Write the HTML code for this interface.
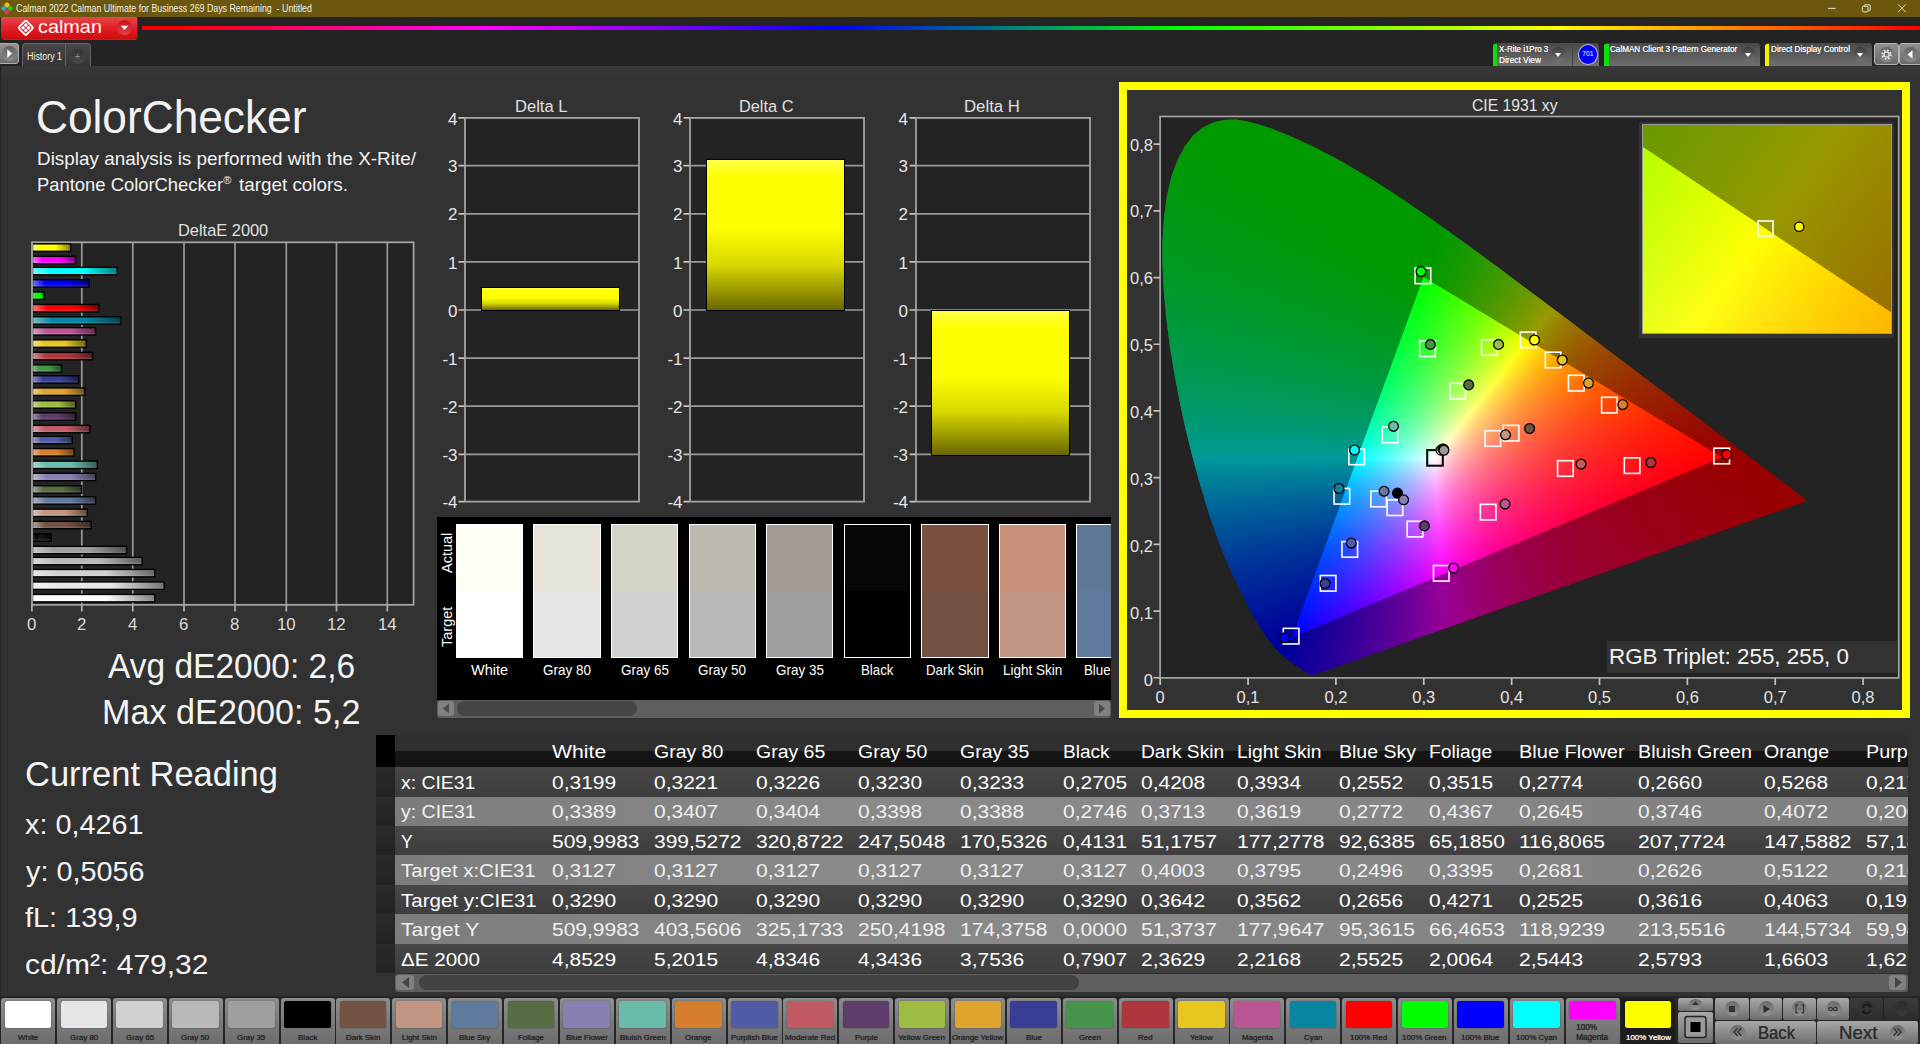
<!DOCTYPE html>
<html lang="en"><head><meta charset="utf-8"><title>Calman 2022 - ColorChecker</title>
<style>*{margin:0;padding:0;box-sizing:content-box}
html,body{width:1920px;height:1044px;overflow:hidden;background:#323232}
body{position:relative;font-family:"Liberation Sans",sans-serif;}
.t{position:absolute;white-space:pre;line-height:1;transform-origin:0 0;display:block}
.dd{position:absolute;top:43px;height:23px;border-radius:3px 3px 0 0;background:linear-gradient(#484848,#6f6f6f);overflow:hidden}
.dd i{position:absolute;left:0;top:1px;width:4.5px;height:22px;border-radius:2px 0 0 0}
.ddc{position:absolute;top:47px;width:15px;height:15px;border-radius:50%;background:linear-gradient(#3e3e3e,#727272)}
.ddc:after{content:"";position:absolute;left:4px;top:6px;border:3.5px solid transparent;border-top:4px solid #fff;border-bottom:0}
.gb{position:absolute;top:43px;height:22px;box-sizing:border-box;border:1px solid #b4b4b4;border-radius:3px;background:linear-gradient(#909090,#6a6a6a)}
.pb{position:absolute;top:997.500px;width:54px;height:46px;border-radius:3px 3px 0 0;background:linear-gradient(#8e8e8e,#848484 30%,#6c6c6c)}
.pb.sel{background:#1d1d1d}
.pb i{position:absolute;left:3.8px;top:3.5px;width:46.500px;height:27px;border-radius:2.500px;box-shadow:0 0 1.500px rgba(0,0,0,.45)}
.cb{position:absolute;border-radius:2px;background:linear-gradient(#a8a8a8,#8e8e8e 45%,#6e6e6e)}
.cb.dk{background:linear-gradient(#3c3c3c,#2c2c2c)}</style></head>
<body>
<div style="position:absolute;left:0;top:66px;width:1920px;height:14px;background:linear-gradient(#393939,#323232)"></div><div style="position:absolute;left:0;top:66px;width:1px;height:929px;background:#262626"></div>
<div style="position:absolute;left:0;top:0;width:1920px;height:17px;background:#6b570d"></div>
<svg style="position:absolute;left:0;top:2px" width="14" height="13" viewBox="0 0 14 13"><g transform="translate(7 6.4) rotate(45)"><rect x="-4.6" y="-4.6" width="4.4" height="4.4" rx="1" fill="#f2c200"/><rect x=".2" y="-4.6" width="4.4" height="4.4" rx="1" fill="#22c032"/><rect x="-4.6" y=".2" width="4.4" height="4.4" rx="1" fill="#27a8e0"/><rect x=".2" y=".2" width="4.4" height="4.4" rx="1" fill="#e8305a"/></g></svg>
<span class="t" style="left:16px;top:3.7px;font-size:10px;color:#f6f2e4;transform:scaleX(0.883);">Calman 2022 Calman Ultimate for Business 269 Days Remaining  - Untitled</span>
<svg style="position:absolute;left:1820px;top:0" width="100" height="17" viewBox="0 0 100 17"><g stroke="#ece6c8" stroke-width="1" fill="none"><path d="M8 8.400h7.600"/><rect x="42.400" y="6.300" width="5.600" height="5.600" rx="1.200"/><path d="M44.200 6.300v-.6q0-.9 .9-.9h4.200q.9 0 .9.900v4.200q0 .9-.9.900h-1.200"/><path d="M78 4.300l7.800 7.800M85.800 4.300l-7.800 7.800" stroke-width=".9"/></g></svg>
<div style="position:absolute;left:0;top:17px;width:1920px;height:49px;background:#232323"></div>
<div style="position:absolute;left:142px;top:26px;width:1778px;height:4px;background:linear-gradient(90deg,#f00 0%,#f00 1.5%,#f0f 19.5%,#00f 39%,#0f0 58.5%,#ff0 79.5%,#f00 100%)"></div>
<div style="position:absolute;left:1px;top:17px;width:135.800px;height:21.800px;border-radius:0 0 3px 3px;background:linear-gradient(#e8474c,#e22228 45%,#d81216 80%,#cf0e10);box-shadow:.5px 1px 0 #4a5656"></div>
<svg style="position:absolute;left:16px;top:18px" width="20" height="20" viewBox="-10 -10 20 20"><g transform="translate(-.2 -.2) rotate(45)"><rect x="-5.300" y="-5.300" width="10.600" height="10.600" rx="1.500" fill="none" stroke="#fff" stroke-width="1.900"/><g fill="#fff"><rect x="-3.450" y="-3.450" width="3.100" height="3.100" rx=".9"/><rect x=".35" y="-3.450" width="3.100" height="3.100" rx=".9"/><rect x="-3.450" y=".35" width="3.100" height="3.100" rx=".9"/><rect x=".35" y=".35" width="3.100" height="3.100" rx=".9"/></g></g></svg>
<span class="t" style="left:37.5px;top:17.7px;font-size:18.8px;color:#fff;transform:scaleX(1.056);">calman</span>
<div style="position:absolute;left:117px;top:20px;width:15px;height:15px;border-radius:50%;background:linear-gradient(#c8141c,#e04046)"></div>
<svg style="position:absolute;left:117px;top:20px" width="15" height="15"><path d="M3.700 5.700h7.600l-3.800 4.300z" fill="#fff"/></svg>
<div style="position:absolute;left:-2px;top:43px;width:21px;height:21px;border-radius:3px;border:1px solid #b0b0b0;box-sizing:border-box;background:linear-gradient(#959595,#6c6c6c)"></div>
<div style="position:absolute;left:2px;top:46px;width:15px;height:15px;border-radius:50%;background:linear-gradient(#5e5e5e,#8a8a8a)"></div>
<svg style="position:absolute;left:2px;top:46px" width="15" height="15"><path d="M5.3 3.3l4.6 4.2-4.6 4.2z" fill="#fff"/></svg>
<div style="position:absolute;left:22px;top:43px;width:69px;height:23px;border-radius:4px 4px 0 0;border:1px solid #636363;border-bottom:0;box-sizing:border-box;background:linear-gradient(#474747,#353535)"></div>
<div style="position:absolute;left:65px;top:44px;width:1px;height:22px;background:#636363"></div>
<span class="t" style="left:26.5px;top:51.5px;font-size:10px;color:#f0f0f0;transform:scaleX(0.887);">History 1</span>
<div style="position:absolute;left:70px;top:49px;width:15px;height:15px;border-radius:50%;background:linear-gradient(#333,#484848)"></div>
<span class="t" style="left:74.48px;top:51.5px;font-size:10px;color:#8a8a8a;">+</span>
<div class="dd" style="left:1492.5px;width:106.5px"><i style="background:#0be00b"></i></div><span class="t" style="left:1498.8px;top:44.1px;font-size:9.6px;color:#f0f0f0;transform:scaleX(0.825);text-shadow:0 0 .3px #fff;">X-Rite i1Pro 3</span><span class="t" style="left:1498.8px;top:55.3px;font-size:9.6px;color:#f0f0f0;transform:scaleX(0.868);text-shadow:0 0 .3px #fff;">Direct View</span><div class="ddc" style="left:1550.5px"></div>
<div style="position:absolute;left:1572px;top:45px;width:1px;height:21px;background:#444"></div>
<div style="position:absolute;left:1578.500px;top:45.200px;width:18.600px;height:18.600px;border-radius:50%;background:#0000fa;box-shadow:0 0 0 1px #b8b8e0"></div>
<span class="t" style="left:1582.23px;top:51.1px;font-size:6.8px;color:#fff;">701</span>
<div class="dd" style="left:1604px;width:156px"><i style="background:#0be00b"></i></div><span class="t" style="left:1610.3px;top:44.1px;font-size:9.6px;color:#f0f0f0;transform:scaleX(0.846);text-shadow:0 0 .3px #fff;">CalMAN Client 3 Pattern Generator</span><div class="ddc" style="left:1740.5px"></div>
<div class="dd" style="left:1764.5px;width:107.5px"><i style="background:#f0f000"></i></div><span class="t" style="left:1770.8px;top:44.1px;font-size:9.6px;color:#f0f0f0;transform:scaleX(0.851);text-shadow:0 0 .3px #fff;">Direct Display Control</span><div class="ddc" style="left:1852.5px"></div>
<div class="gb" style="left:1874px;width:25px"></div><div class="gb" style="left:1899px;width:25px"></div>
<div style="position:absolute;left:1879px;top:46.5px;width:15px;height:15px;border-radius:50%;background:linear-gradient(#666,#8a8a8a)"></div><div style="position:absolute;left:1903px;top:46.5px;width:15px;height:15px;border-radius:50%;background:linear-gradient(#666,#8a8a8a)"></div>
<svg style="position:absolute;left:1879px;top:46.5px" width="40" height="15"><g transform="translate(7.5 7.5)" fill="none" stroke="#f0f0f0"><circle r="2.6" stroke-width="1.3"/><circle r="4.3" stroke-width="1.7" stroke-dasharray="1.7 1.68"/></g><path d="M28.5 7.5l5-4.3v8.6z" fill="#fff"/></svg>
<span class="t" style="left:36px;top:93px;font-size:47px;color:#f2f2f2;transform:scaleX(0.941);">ColorChecker</span>
<span class="t" style="left:37px;top:149.3px;font-size:19px;color:#f2f2f2;transform:scaleX(0.994);">Display analysis is performed with the X-Rite/</span>
<span class="t" style="left:37px;top:174.5px;font-size:19px;color:#f2f2f2;transform:scaleX(0.968);">Pantone ColorChecker</span>
<span class="t" style="left:223.3px;top:175px;font-size:11px;color:#f2f2f2;">®</span>
<span class="t" style="left:238.5px;top:174.5px;font-size:19px;color:#f2f2f2;transform:scaleX(0.992);">target colors.</span>
<span class="t" style="left:178.15px;top:222.6px;font-size:16.8px;color:#e0e0e0;transform:scaleX(0.977);">DeltaE 2000</span>
<svg style="position:absolute;left:20px;top:236px" width="400" height="380" viewBox="20 236 400 380"><rect x="32" y="242.3" width="381.600" height="362.500" fill="#232323" stroke="#a4a4a4" stroke-width="1.800"/><path d="M81.8 243V604M132.8 243V604M184 243V604M235 243V604M286.3 243V604M336.5 243V604M387.3 243V604" stroke="#989898" stroke-width="1.700" fill="none"/><path d="M31.9 604V611.500M81.8 604V611.500M132.8 604V611.500M184 604V611.500M235 604V611.500M286.3 604V611.500M336.5 604V611.500M387.3 604V611.500" stroke="#b0b0b0" stroke-width="1.700" fill="none"/></svg>
<span class="t" style="left:26.82px;top:615.85px;font-size:16.5px;color:#dcdcdc;transform:scaleX(1.02);">0</span>
<span class="t" style="left:76.72px;top:615.85px;font-size:16.5px;color:#dcdcdc;transform:scaleX(1.02);">2</span>
<span class="t" style="left:127.72px;top:615.85px;font-size:16.5px;color:#dcdcdc;transform:scaleX(1.02);">4</span>
<span class="t" style="left:178.92px;top:615.85px;font-size:16.5px;color:#dcdcdc;transform:scaleX(1.02);">6</span>
<span class="t" style="left:229.92px;top:615.85px;font-size:16.5px;color:#dcdcdc;transform:scaleX(1.02);">8</span>
<span class="t" style="left:276.54px;top:615.85px;font-size:16.5px;color:#dcdcdc;transform:scaleX(1.02);">10</span>
<span class="t" style="left:326.74px;top:615.85px;font-size:16.5px;color:#dcdcdc;transform:scaleX(1.02);">12</span>
<span class="t" style="left:377.54px;top:615.85px;font-size:16.5px;color:#dcdcdc;transform:scaleX(1.02);">14</span>
<svg style="position:absolute;left:33px;top:243px" width="380" height="362" viewBox="33 243 380 362"><defs><linearGradient id="gl" x1="0" y1="0" x2="0" y2="1"><stop offset="0" stop-color="#fff" stop-opacity="0"/><stop offset=".6" stop-color="#fff" stop-opacity="0"/><stop offset="1" stop-color="#fff" stop-opacity=".16"/></linearGradient><linearGradient id="b0"><stop offset="0" stop-color="#ffff73"/><stop offset="0.22" stop-color="#ffff00"/><stop offset="0.6" stop-color="#ffff00"/><stop offset="1" stop-color="#808000"/></linearGradient><linearGradient id="b1"><stop offset="0" stop-color="#ff73ff"/><stop offset="0.22" stop-color="#ff00ff"/><stop offset="0.6" stop-color="#ff00ff"/><stop offset="1" stop-color="#800080"/></linearGradient><linearGradient id="b2"><stop offset="0" stop-color="#73ffff"/><stop offset="0.22" stop-color="#00ffff"/><stop offset="0.6" stop-color="#00ffff"/><stop offset="1" stop-color="#008080"/></linearGradient><linearGradient id="b3"><stop offset="0" stop-color="#7373ff"/><stop offset="0.22" stop-color="#0000ff"/><stop offset="0.6" stop-color="#0000ff"/><stop offset="1" stop-color="#000080"/></linearGradient><linearGradient id="b4"><stop offset="0" stop-color="#73ff73"/><stop offset="0.22" stop-color="#00ff00"/><stop offset="0.6" stop-color="#00ff00"/><stop offset="1" stop-color="#008000"/></linearGradient><linearGradient id="b5"><stop offset="0" stop-color="#ff7373"/><stop offset="0.22" stop-color="#ff0000"/><stop offset="0.6" stop-color="#ff0000"/><stop offset="1" stop-color="#800000"/></linearGradient><linearGradient id="b6"><stop offset="0" stop-color="#77bccb"/><stop offset="0.22" stop-color="#0885a1"/><stop offset="0.6" stop-color="#0885a1"/><stop offset="1" stop-color="#044250"/></linearGradient><linearGradient id="b7"><stop offset="0" stop-color="#daa2c5"/><stop offset="0.22" stop-color="#bb5695"/><stop offset="0.6" stop-color="#bb5695"/><stop offset="1" stop-color="#5e2b4a"/></linearGradient><linearGradient id="b8"><stop offset="0" stop-color="#f2e084"/><stop offset="0.22" stop-color="#e7c71f"/><stop offset="0.6" stop-color="#e7c71f"/><stop offset="1" stop-color="#746410"/></linearGradient><linearGradient id="b9"><stop offset="0" stop-color="#d39094"/><stop offset="0.22" stop-color="#af363c"/><stop offset="0.6" stop-color="#af363c"/><stop offset="1" stop-color="#581b1e"/></linearGradient><linearGradient id="b10"><stop offset="0" stop-color="#99c49b"/><stop offset="0.22" stop-color="#469449"/><stop offset="0.6" stop-color="#469449"/><stop offset="1" stop-color="#234a24"/></linearGradient><linearGradient id="b11"><stop offset="0" stop-color="#9294c5"/><stop offset="0.22" stop-color="#383d96"/><stop offset="0.6" stop-color="#383d96"/><stop offset="1" stop-color="#1c1e4b"/></linearGradient><linearGradient id="b12"><stop offset="0" stop-color="#eecc8c"/><stop offset="0.22" stop-color="#e0a32e"/><stop offset="0.6" stop-color="#e0a32e"/><stop offset="1" stop-color="#705217"/></linearGradient><linearGradient id="b13"><stop offset="0" stop-color="#c9da96"/><stop offset="0.22" stop-color="#9dbc40"/><stop offset="0.6" stop-color="#9dbc40"/><stop offset="1" stop-color="#4e5e20"/></linearGradient><linearGradient id="b14"><stop offset="0" stop-color="#a694ae"/><stop offset="0.22" stop-color="#5e3c6c"/><stop offset="0.6" stop-color="#5e3c6c"/><stop offset="1" stop-color="#2f1e36"/></linearGradient><linearGradient id="b15"><stop offset="0" stop-color="#dda4a9"/><stop offset="0.22" stop-color="#c15a63"/><stop offset="0.6" stop-color="#c15a63"/><stop offset="1" stop-color="#602d32"/></linearGradient><linearGradient id="b16"><stop offset="0" stop-color="#9fa5ce"/><stop offset="0.22" stop-color="#505ba6"/><stop offset="0.6" stop-color="#505ba6"/><stop offset="1" stop-color="#282e53"/></linearGradient><linearGradient id="b17"><stop offset="0" stop-color="#e8b88b"/><stop offset="0.22" stop-color="#d67e2c"/><stop offset="0.6" stop-color="#d67e2c"/><stop offset="1" stop-color="#6b3f16"/></linearGradient><linearGradient id="b18"><stop offset="0" stop-color="#abdbd0"/><stop offset="0.22" stop-color="#67bdaa"/><stop offset="0.6" stop-color="#67bdaa"/><stop offset="1" stop-color="#345e55"/></linearGradient><linearGradient id="b19"><stop offset="0" stop-color="#bcb9d4"/><stop offset="0.22" stop-color="#8580b1"/><stop offset="0.6" stop-color="#8580b1"/><stop offset="1" stop-color="#424058"/></linearGradient><linearGradient id="b20"><stop offset="0" stop-color="#a3ae98"/><stop offset="0.22" stop-color="#576c43"/><stop offset="0.6" stop-color="#576c43"/><stop offset="1" stop-color="#2c3622"/></linearGradient><linearGradient id="b21"><stop offset="0" stop-color="#a9b6c9"/><stop offset="0.22" stop-color="#627a9d"/><stop offset="0.6" stop-color="#627a9d"/><stop offset="1" stop-color="#313d4e"/></linearGradient><linearGradient id="b22"><stop offset="0" stop-color="#ddc5ba"/><stop offset="0.22" stop-color="#c29682"/><stop offset="0.6" stop-color="#c29682"/><stop offset="1" stop-color="#614b41"/></linearGradient><linearGradient id="b23"><stop offset="0" stop-color="#b2a098"/><stop offset="0.22" stop-color="#735244"/><stop offset="0.6" stop-color="#735244"/><stop offset="1" stop-color="#3a2922"/></linearGradient><linearGradient id="b24"><stop offset="0" stop-color="#2a2a2a"/><stop offset="0.2" stop-color="#050505"/><stop offset="0.5" stop-color="#151515"/><stop offset="1" stop-color="#050505"/></linearGradient><linearGradient id="b25"><stop offset="0" stop-color="#cacaca"/><stop offset="0.22" stop-color="#9e9e9e"/><stop offset="0.6" stop-color="#9e9e9e"/><stop offset="1" stop-color="#4f4f4f"/></linearGradient><linearGradient id="b26"><stop offset="0" stop-color="#d8d8d8"/><stop offset="0.22" stop-color="#b8b8b8"/><stop offset="0.6" stop-color="#b8b8b8"/><stop offset="1" stop-color="#5c5c5c"/></linearGradient><linearGradient id="b27"><stop offset="0" stop-color="#e5e5e5"/><stop offset="0.22" stop-color="#d0d0d0"/><stop offset="0.6" stop-color="#d0d0d0"/><stop offset="1" stop-color="#686868"/></linearGradient><linearGradient id="b28"><stop offset="0" stop-color="#f1f1f1"/><stop offset="0.22" stop-color="#e6e6e6"/><stop offset="0.6" stop-color="#e6e6e6"/><stop offset="1" stop-color="#737373"/></linearGradient><linearGradient id="b29"><stop offset="0" stop-color="#ffffff"/><stop offset="0.22" stop-color="#ffffff"/><stop offset="0.6" stop-color="#ffffff"/><stop offset="1" stop-color="#808080"/></linearGradient></defs><rect x="32.5" y="243.85" width="38.1" height="7.4" fill="url(#b0)" stroke="#000" stroke-width="1.4"/><rect x="33.2" y="244.55" width="36.9" height="6" fill="url(#gl)"/><rect x="32.5" y="256.35" width="43.1" height="7.4" fill="url(#b1)" stroke="#000" stroke-width="1.4"/><rect x="33.2" y="257.05" width="41.9" height="6" fill="url(#gl)"/><rect x="32.5" y="267.35" width="84.8" height="7.4" fill="url(#b2)" stroke="#000" stroke-width="1.4"/><rect x="33.2" y="268.05" width="83.6" height="6" fill="url(#gl)"/><rect x="32.5" y="279.75" width="56.8" height="7.4" fill="url(#b3)" stroke="#000" stroke-width="1.4"/><rect x="33.2" y="280.45" width="55.6" height="6" fill="url(#gl)"/><rect x="32.5" y="291.95" width="11.8" height="7.4" fill="url(#b4)" stroke="#000" stroke-width="1.4"/><rect x="33.2" y="292.65" width="10.6" height="6" fill="url(#gl)"/><rect x="32.5" y="304.45" width="66.2" height="7.4" fill="url(#b5)" stroke="#000" stroke-width="1.4"/><rect x="33.2" y="305.15" width="65" height="6" fill="url(#gl)"/><rect x="32.5" y="316.75" width="88.1" height="7.4" fill="url(#b6)" stroke="#000" stroke-width="1.4"/><rect x="33.2" y="317.45" width="86.9" height="6" fill="url(#gl)"/><rect x="32.5" y="327.65" width="63.1" height="7.4" fill="url(#b7)" stroke="#000" stroke-width="1.4"/><rect x="33.2" y="328.35" width="61.9" height="6" fill="url(#gl)"/><rect x="32.5" y="339.85" width="53.8" height="7.4" fill="url(#b8)" stroke="#000" stroke-width="1.4"/><rect x="33.2" y="340.55" width="52.6" height="6" fill="url(#gl)"/><rect x="32.5" y="352.35" width="60.1" height="7.4" fill="url(#b9)" stroke="#000" stroke-width="1.4"/><rect x="33.2" y="353.05" width="58.9" height="6" fill="url(#gl)"/><rect x="32.5" y="364.85" width="29.1" height="7.4" fill="url(#b10)" stroke="#000" stroke-width="1.4"/><rect x="33.2" y="365.55" width="27.9" height="6" fill="url(#gl)"/><rect x="32.5" y="375.75" width="46.1" height="7.4" fill="url(#b11)" stroke="#000" stroke-width="1.4"/><rect x="33.2" y="376.45" width="44.9" height="6" fill="url(#gl)"/><rect x="32.5" y="387.95" width="52.2" height="7.4" fill="url(#b12)" stroke="#000" stroke-width="1.4"/><rect x="33.2" y="388.65" width="51" height="6" fill="url(#gl)"/><rect x="32.5" y="400.75" width="43.2" height="7.4" fill="url(#b13)" stroke="#000" stroke-width="1.4"/><rect x="33.2" y="401.45" width="42" height="6" fill="url(#gl)"/><rect x="32.5" y="412.85" width="43.2" height="7.4" fill="url(#b14)" stroke="#000" stroke-width="1.4"/><rect x="33.2" y="413.55" width="42" height="6" fill="url(#gl)"/><rect x="32.5" y="425.35" width="57.2" height="7.4" fill="url(#b15)" stroke="#000" stroke-width="1.4"/><rect x="33.2" y="426.05" width="56" height="6" fill="url(#gl)"/><rect x="32.5" y="436.35" width="39.7" height="7.4" fill="url(#b16)" stroke="#000" stroke-width="1.4"/><rect x="33.2" y="437.05" width="38.5" height="6" fill="url(#gl)"/><rect x="32.5" y="448.6" width="41.6" height="7.4" fill="url(#b17)" stroke="#000" stroke-width="1.4"/><rect x="33.2" y="449.3" width="40.4" height="6" fill="url(#gl)"/><rect x="32.5" y="461.1" width="64.7" height="7.4" fill="url(#b18)" stroke="#000" stroke-width="1.4"/><rect x="33.2" y="461.8" width="63.5" height="6" fill="url(#gl)"/><rect x="32.5" y="473.25" width="63.2" height="7.4" fill="url(#b19)" stroke="#000" stroke-width="1.4"/><rect x="33.2" y="473.95" width="62" height="6" fill="url(#gl)"/><rect x="32.5" y="485.75" width="49.1" height="7.4" fill="url(#b20)" stroke="#000" stroke-width="1.4"/><rect x="33.2" y="486.45" width="47.9" height="6" fill="url(#gl)"/><rect x="32.5" y="496.75" width="63.1" height="7.4" fill="url(#b21)" stroke="#000" stroke-width="1.4"/><rect x="33.2" y="497.45" width="61.9" height="6" fill="url(#gl)"/><rect x="32.5" y="509.1" width="54.9" height="7.4" fill="url(#b22)" stroke="#000" stroke-width="1.4"/><rect x="33.2" y="509.8" width="53.7" height="6" fill="url(#gl)"/><rect x="32.5" y="521.35" width="58.7" height="7.4" fill="url(#b23)" stroke="#000" stroke-width="1.4"/><rect x="33.2" y="522.05" width="57.5" height="6" fill="url(#gl)"/><rect x="32.5" y="533.85" width="18.8" height="7.4" fill="url(#b24)" stroke="#000" stroke-width="1.4"/><rect x="33.2" y="534.55" width="17.6" height="6" fill="url(#gl)"/><rect x="32.5" y="546.35" width="94.1" height="7.4" fill="url(#b25)" stroke="#000" stroke-width="1.4"/><rect x="33.2" y="547.05" width="92.9" height="6" fill="url(#gl)"/><rect x="32.5" y="557.35" width="109.7" height="7.4" fill="url(#b26)" stroke="#000" stroke-width="1.4"/><rect x="33.2" y="558.05" width="108.5" height="6" fill="url(#gl)"/><rect x="32.5" y="569.45" width="122.2" height="7.4" fill="url(#b27)" stroke="#000" stroke-width="1.4"/><rect x="33.2" y="570.15" width="121" height="6" fill="url(#gl)"/><rect x="32.5" y="581.95" width="131.6" height="7.4" fill="url(#b28)" stroke="#000" stroke-width="1.4"/><rect x="33.2" y="582.65" width="130.4" height="6" fill="url(#gl)"/><rect x="32.5" y="594.45" width="122.2" height="7.4" fill="url(#b29)" stroke="#000" stroke-width="1.4"/><rect x="33.2" y="595.15" width="121" height="6" fill="url(#gl)"/></svg>
<span class="t" style="left:107.5px;top:647.5px;font-size:35px;color:#f4f4f4;transform:scaleX(0.957);">Avg dE2000: 2,6</span>
<span class="t" style="left:101.75px;top:693.7px;font-size:35px;color:#f4f4f4;transform:scaleX(0.977);">Max dE2000: 5,2</span>
<span class="t" style="left:24.5px;top:756px;font-size:35px;color:#f4f4f4;transform:scaleX(0.985);">Current Reading</span>
<span class="t" style="left:25px;top:810.35px;font-size:28.5px;color:#f4f4f4;transform:scaleX(1.011);">x: 0,4261</span>
<span class="t" style="left:25.5px;top:856.95px;font-size:28.5px;color:#f4f4f4;transform:scaleX(1.011);">y: 0,5056</span>
<span class="t" style="left:25px;top:903.05px;font-size:28.5px;color:#f4f4f4;transform:scaleX(1.014);">fL: 139,9</span>
<span class="t" style="left:25px;top:949.75px;font-size:28.5px;color:#f4f4f4;transform:scaleX(1.053);">cd/m²: 479,32</span>
<span class="t" style="left:515.25px;top:99.4px;font-size:16.8px;color:#e0e0e0;transform:scaleX(0.986);">Delta L</span>
<svg style="position:absolute;left:454px;top:110px" width="190" height="400" viewBox="454 110 190 400"><rect x="465" y="117.900" width="174" height="383.700" fill="#232323" stroke="#a4a4a4" stroke-width="1.800"/><path d="M465 165.7H639M465 213.8H639M465 261.9H639M465 310H639M465 358.1H639M465 406.2H639M465 454.3H639" stroke="#9a9a9a" stroke-width="1.700" fill="none"/><path d="M458.5 117.9H464.5M458.5 165.7H464.5M458.5 213.8H464.5M458.5 261.9H464.5M458.5 310H464.5M458.5 358.1H464.5M458.5 406.2H464.5M458.5 454.3H464.5M458.5 501.6H464.5" stroke="#c4c4c4" stroke-width="1.700" fill="none"/></svg>
<span class="t" style="left:448.05px;top:110.5px;font-size:17px;color:#e6e6e6;">4</span>
<span class="t" style="left:448.05px;top:158.3px;font-size:17px;color:#e6e6e6;">3</span>
<span class="t" style="left:448.05px;top:206.4px;font-size:17px;color:#e6e6e6;">2</span>
<span class="t" style="left:448.05px;top:254.5px;font-size:17px;color:#e6e6e6;">1</span>
<span class="t" style="left:448.05px;top:302.6px;font-size:17px;color:#e6e6e6;">0</span>
<span class="t" style="left:442.38px;top:350.7px;font-size:17px;color:#e6e6e6;">-1</span>
<span class="t" style="left:442.38px;top:398.8px;font-size:17px;color:#e6e6e6;">-2</span>
<span class="t" style="left:442.38px;top:446.9px;font-size:17px;color:#e6e6e6;">-3</span>
<span class="t" style="left:442.38px;top:494.2px;font-size:17px;color:#e6e6e6;">-4</span>
<div style="position:absolute;left:481px;top:287px;width:139px;height:24px;border:1px solid #000;box-sizing:border-box;background:linear-gradient(#ffff48,#ff0 12%,#ff0 45%,#d8d800 70%,#6a6600)"></div>
<span class="t" style="left:739.25px;top:99.4px;font-size:16.8px;color:#e0e0e0;transform:scaleX(0.973);">Delta C</span>
<svg style="position:absolute;left:679px;top:110px" width="190" height="400" viewBox="679 110 190 400"><rect x="690" y="117.900" width="174" height="383.700" fill="#232323" stroke="#a4a4a4" stroke-width="1.800"/><path d="M690 165.7H864M690 213.8H864M690 261.9H864M690 310H864M690 358.1H864M690 406.2H864M690 454.3H864" stroke="#9a9a9a" stroke-width="1.700" fill="none"/><path d="M683.5 117.9H689.5M683.5 165.7H689.5M683.5 213.8H689.5M683.5 261.9H689.5M683.5 310H689.5M683.5 358.1H689.5M683.5 406.2H689.5M683.5 454.3H689.5M683.5 501.6H689.5" stroke="#c4c4c4" stroke-width="1.700" fill="none"/></svg>
<span class="t" style="left:673.05px;top:110.5px;font-size:17px;color:#e6e6e6;">4</span>
<span class="t" style="left:673.05px;top:158.3px;font-size:17px;color:#e6e6e6;">3</span>
<span class="t" style="left:673.05px;top:206.4px;font-size:17px;color:#e6e6e6;">2</span>
<span class="t" style="left:673.05px;top:254.5px;font-size:17px;color:#e6e6e6;">1</span>
<span class="t" style="left:673.05px;top:302.6px;font-size:17px;color:#e6e6e6;">0</span>
<span class="t" style="left:667.38px;top:350.7px;font-size:17px;color:#e6e6e6;">-1</span>
<span class="t" style="left:667.38px;top:398.8px;font-size:17px;color:#e6e6e6;">-2</span>
<span class="t" style="left:667.38px;top:446.9px;font-size:17px;color:#e6e6e6;">-3</span>
<span class="t" style="left:667.38px;top:494.2px;font-size:17px;color:#e6e6e6;">-4</span>
<div style="position:absolute;left:706px;top:159px;width:139px;height:152px;border:1px solid #000;box-sizing:border-box;background:linear-gradient(#ffff48,#ff0 12%,#ff0 45%,#d8d800 70%,#6a6600)"></div>
<span class="t" style="left:964px;top:99.4px;font-size:16.8px;color:#e0e0e0;">Delta H</span>
<svg style="position:absolute;left:904.5px;top:110px" width="190" height="400" viewBox="904.5 110 190 400"><rect x="915.5" y="117.900" width="174" height="383.700" fill="#232323" stroke="#a4a4a4" stroke-width="1.800"/><path d="M915.5 165.7H1089.5M915.5 213.8H1089.5M915.5 261.9H1089.5M915.5 310H1089.5M915.5 358.1H1089.5M915.5 406.2H1089.5M915.5 454.3H1089.5" stroke="#9a9a9a" stroke-width="1.700" fill="none"/><path d="M909 117.9H915M909 165.7H915M909 213.8H915M909 261.9H915M909 310H915M909 358.1H915M909 406.2H915M909 454.3H915M909 501.6H915" stroke="#c4c4c4" stroke-width="1.700" fill="none"/></svg>
<span class="t" style="left:898.55px;top:110.5px;font-size:17px;color:#e6e6e6;">4</span>
<span class="t" style="left:898.55px;top:158.3px;font-size:17px;color:#e6e6e6;">3</span>
<span class="t" style="left:898.55px;top:206.4px;font-size:17px;color:#e6e6e6;">2</span>
<span class="t" style="left:898.55px;top:254.5px;font-size:17px;color:#e6e6e6;">1</span>
<span class="t" style="left:898.55px;top:302.6px;font-size:17px;color:#e6e6e6;">0</span>
<span class="t" style="left:892.88px;top:350.7px;font-size:17px;color:#e6e6e6;">-1</span>
<span class="t" style="left:892.88px;top:398.8px;font-size:17px;color:#e6e6e6;">-2</span>
<span class="t" style="left:892.88px;top:446.9px;font-size:17px;color:#e6e6e6;">-3</span>
<span class="t" style="left:892.88px;top:494.2px;font-size:17px;color:#e6e6e6;">-4</span>
<div style="position:absolute;left:930.8px;top:310px;width:139px;height:146px;border:1px solid #000;box-sizing:border-box;background:linear-gradient(#ffff48,#ff0 12%,#ff0 45%,#d8d800 70%,#6a6600)"></div>
<div style="position:absolute;left:437px;top:517px;width:674px;height:183px;background:#000;overflow:hidden">
<div style="position:absolute;left:18.9px;top:6.5px;width:65.3px;height:132px;border:1px solid #fff;background:linear-gradient(#fffdf5 66.3px,#ffffff 66.3px)"></div>
<span class="t" style="left:33.95px;top:146.05px;font-size:14.3px;color:#fff;transform:scaleX(1.015);">White</span>
<div style="position:absolute;left:96.47px;top:6.5px;width:65.3px;height:132px;border:1px solid #fff;background:linear-gradient(#e7e5d9 66.3px,#e6e6e6 66.3px)"></div>
<span class="t" style="left:106.12px;top:146.05px;font-size:14.3px;color:#fff;transform:scaleX(0.942);">Gray 80</span>
<div style="position:absolute;left:174.04px;top:6.5px;width:65.3px;height:132px;border:1px solid #fff;background:linear-gradient(#d5d2c6 66.3px,#d1d1d1 66.3px)"></div>
<span class="t" style="left:183.69px;top:146.05px;font-size:14.3px;color:#fff;transform:scaleX(0.942);">Gray 65</span>
<div style="position:absolute;left:251.61px;top:6.5px;width:65.3px;height:132px;border:1px solid #fff;background:linear-gradient(#beb9b1 66.3px,#b9b9b9 66.3px)"></div>
<span class="t" style="left:261.26px;top:146.05px;font-size:14.3px;color:#fff;transform:scaleX(0.942);">Gray 50</span>
<div style="position:absolute;left:329.18px;top:6.5px;width:65.3px;height:132px;border:1px solid #fff;background:linear-gradient(#a19b94 66.3px,#9e9e9e 66.3px)"></div>
<span class="t" style="left:338.83px;top:146.05px;font-size:14.3px;color:#fff;transform:scaleX(0.942);">Gray 35</span>
<div style="position:absolute;left:406.75px;top:6.5px;width:65.3px;height:132px;border:1px solid #fff;background:linear-gradient(#050608 66.3px,#000000 66.3px)"></div>
<span class="t" style="left:424.1px;top:146.05px;font-size:14.3px;color:#fff;transform:scaleX(0.929);">Black</span>
<div style="position:absolute;left:484.32px;top:6.5px;width:65.3px;height:132px;border:1px solid #fff;background:linear-gradient(#7c503e 66.3px,#735244 66.3px)"></div>
<span class="t" style="left:489.12px;top:146.05px;font-size:14.3px;color:#fff;transform:scaleX(0.929);">Dark Skin</span>
<div style="position:absolute;left:561.89px;top:6.5px;width:65.3px;height:132px;border:1px solid #fff;background:linear-gradient(#c8927a 66.3px,#c29682 66.3px)"></div>
<span class="t" style="left:565.79px;top:146.05px;font-size:14.3px;color:#fff;transform:scaleX(0.946);">Light Skin</span>
<div style="position:absolute;left:639.46px;top:6.5px;width:65.3px;height:132px;border:1px solid #fff;background:linear-gradient(#5d7897 66.3px,#5e7a9d 66.3px)"></div>
<span class="t" style="left:646.81px;top:146.05px;font-size:14.3px;color:#fff;transform:scaleX(0.93);">Blue Sky</span>
<span class="t" style="left:-1px;top:29px;font-size:14.5px;color:#fff;transform:rotate(-90deg);transform-origin:0 0;width:0;height:0"><span style="position:absolute;left:-27px;top:4px">Actual</span><span style="position:absolute;left:-101px;top:4px">Target</span></span>
</div>
<div style="position:absolute;left:437px;top:700px;width:674px;height:18px;background:#5f5f5f;border-radius:3px"></div>
<div style="position:absolute;left:457px;top:701px;width:180px;height:15px;background:#454545;border-radius:8px"></div>
<div style="position:absolute;left:438px;top:701px;width:16px;height:15px;background:#808080;border-radius:3px"></div>
<div style="position:absolute;left:1094px;top:701px;width:16px;height:15px;background:#808080;border-radius:3px"></div>
<svg style="position:absolute;left:437px;top:700px" width="674" height="18"><path d="M6 8.5l6-5v10z" fill="#484848"/><path d="M668 8.5l-6-5v10z" fill="#484848"/></svg>
<div id="cie" style="position:absolute;left:1119px;top:82px;width:775px;height:620px;border:8px solid #ff0"></div>
<span class="t" style="left:1471.7px;top:96.5px;font-size:17px;color:#e4e4e4;transform:scaleX(0.924);">CIE 1931 xy</span>
<svg style="position:absolute;left:1150px;top:110px" width="756" height="580" viewBox="1150 110 756 580"><rect x="1160.1" y="116.5" width="738.6" height="561.4" fill="#232323" stroke="#a4a4a4" stroke-width="1.7"/><path d="M1153.5 677.75H1160M1160.2 678V685M1153.5 611.05H1160M1248.06 678V685M1153.5 544.35H1160M1335.92 678V685M1153.5 477.65H1160M1423.78 678V685M1153.5 410.95H1160M1511.64 678V685M1153.5 344.25H1160M1599.5 678V685M1153.5 277.55H1160M1687.36 678V685M1153.5 210.85H1160M1775.22 678V685M1153.5 144.15H1160M1863.08 678V685" stroke="#c0c0c0" stroke-width="1.7" fill="none"/></svg>
<div style="position:absolute;left:1161px;top:118px;width:737px;height:559px;background:conic-gradient(at 130.71px 519.46px,rgb(0,255,255) 0deg,rgb(0,255,255) 20deg,rgb(6,255,255) 20.75deg,rgb(41,255,255) 24.25deg,rgb(78,255,255) 27.5deg,rgb(113,255,255) 30.25deg,rgb(150,255,255) 32.75deg,rgb(187,255,255) 35deg,rgb(224,255,255) 37deg,rgb(254,255,255) 38.5deg,rgb(255,240,255) 39.25deg,rgb(255,212,255) 40.75deg,rgb(255,185,255) 42.5deg,rgb(255,157,255) 44.5deg,rgb(255,131,255) 46.75deg,rgb(255,107,255) 49.25deg,rgb(255,82,255) 52.25deg,rgb(255,58,255) 55.75deg,rgb(255,33,255) 60deg,rgb(255,10,255) 65deg,rgb(255,0,255) 67.25deg,rgb(255,0,255) 200deg,rgb(0,0,255) 200.25deg,rgb(0,0,255) 247.25deg,rgb(0,255,255) 247.5deg,rgb(0,255,255) 360deg),conic-gradient(at 262.53px 159.12px,rgb(0,255,0) 0deg,rgb(0,255,0) 20deg,rgb(255,255,0) 20.25deg,rgb(255,255,0) 121.25deg,rgb(255,255,32) 134.5deg,rgb(255,255,57) 143.75deg,rgb(255,255,82) 151deg,rgb(255,255,106) 156.75deg,rgb(255,255,129) 161.5deg,rgb(255,255,153) 165.5deg,rgb(255,255,177) 168.75deg,rgb(255,255,202) 171.75deg,rgb(255,255,228) 174.25deg,rgb(254,255,255) 176.5deg,rgb(204,255,255) 180.5deg,rgb(152,255,255) 185deg,rgb(96,255,255) 190.25deg,rgb(31,255,255) 196.75deg,rgb(1,255,255) 200deg,rgb(0,255,255) 200.75deg,rgb(0,255,255) 301deg,rgb(0,255,0) 301.25deg,rgb(0,255,0) 360deg),conic-gradient(at 561.3px 339.29px,rgb(255,255,0) 0deg,rgb(255,255,0) 67.25deg,rgb(255,0,0) 67.5deg,rgb(255,0,0) 121deg,rgb(255,0,255) 121.25deg,rgb(255,0,255) 247.25deg,rgb(255,29,255) 251deg,rgb(255,64,255) 255deg,rgb(255,99,255) 258.5deg,rgb(255,136,255) 261.75deg,rgb(255,171,255) 264.5deg,rgb(255,207,255) 267deg,rgb(255,244,255) 269.25deg,rgb(255,253,255) 269.75deg,rgb(255,255,253) 270deg,rgb(255,255,224) 271.75deg,rgb(255,255,195) 273.75deg,rgb(255,255,167) 276deg,rgb(255,255,140) 278.5deg,rgb(255,255,113) 281.5deg,rgb(255,255,86) 285deg,rgb(255,255,59) 289deg,rgb(255,255,33) 293.75deg,rgb(255,255,7) 299.5deg,rgb(255,255,0) 301.25deg,rgb(255,255,0) 360deg);background-blend-mode:darken,darken,normal;clip-path:polygon(152.16px 556.92px,151.79px 556.96px,151.87px 556.96px,152.01px 556.94px,152.06px 556.92px,151.97px 556.96px,151.78px 557.02px,151.55px 557.03px,151.5px 557.03px,151.57px 557.02px,151.58px 557.02px,151.48px 557.05px,151.3px 557.09px,151.11px 557.1px,151px 557.1px,150.91px 557.1px,150.82px 557.1px,150.7px 557.1px,150.6px 557.1px,150.48px 557.1px,150.28px 557.11px,150px 557.09px,149.74px 557.03px,149.48px 556.94px,149.21px 556.83px,148.9px 556.7px,148.55px 556.53px,148.17px 556.33px,147.78px 556.11px,147.36px 555.86px,146.9px 555.57px,146.36px 555.24px,145.76px 554.85px,145.11px 554.42px,144.43px 553.95px,143.71px 553.44px,142.91px 552.89px,142.05px 552.3px,141.09px 551.67px,140.03px 550.96px,138.82px 550.17px,137.5px 549.3px,136.07px 548.36px,134.55px 547.35px,132.91px 546.25px,131.13px 545px,129.21px 543.62px,127.14px 542.08px,124.93px 540.3px,122.62px 538.37px,120.15px 536.18px,117.39px 533.43px,114.32px 530.08px,110.97px 526.15px,107.31px 521.41px,103.37px 515.9px,99.13px 509.57px,94.52px 501.98px,89.54px 493.13px,84.18px 483.03px,78.41px 471.3px,72.09px 457.9px,65.34px 442.86px,58.52px 425.86px,51.69px 406.73px,44.79px 385.67px,38.03px 362.86px,31.3px 338.02px,24.71px 311.44px,18.77px 284.27px,13.49px 256.45px,8.86px 228.04px,5.31px 200.31px,2.87px 173.41px,1.5px 147.2px,1.53px 122.53px,3.04px 99.38px,5.96px 77.79px,10.35px 58.67px,16.39px 42.19px,23.92px 28.21px,32.51px 17.1px,42.2px 9.21px,52.93px 4.27px,64.1px 1.64px,75.64px 1.58px,87.56px 3.83px,99.48px 7.01px,111.43px 10.91px,123.42px 15.75px,135.17px 20.86px,146.57px 26.06px,157.75px 31.54px,168.78px 37.23px,179.66px 43.11px,190.39px 49.19px,201.07px 55.47px,211.73px 61.97px,222.34px 68.66px,232.91px 75.51px,243.43px 82.5px,253.92px 89.63px,264.39px 96.87px,274.85px 104.21px,285.31px 111.65px,295.77px 119.17px,306.26px 126.76px,316.76px 134.42px,327.24px 142.13px,337.69px 149.87px,348.12px 157.64px,358.52px 165.42px,368.93px 173.19px,379.32px 180.97px,389.63px 188.71px,399.88px 196.43px,410.05px 204.11px,420.13px 211.73px,430.11px 219.29px,439.99px 226.77px,449.74px 234.15px,459.36px 241.44px,468.83px 248.61px,478.13px 255.64px,487.24px 262.52px,496.17px 269.25px,504.84px 275.79px,513.25px 282.17px,521.39px 288.36px,529.18px 294.28px,536.57px 299.87px,543.61px 305.19px,550.36px 310.29px,556.87px 315.22px,563.11px 319.93px,568.99px 324.37px,574.48px 328.5px,579.63px 332.36px,584.45px 335.98px,588.95px 339.39px,593.13px 342.57px,597.02px 345.53px,600.62px 348.27px,603.94px 350.79px,607.04px 353.13px,609.91px 355.29px,612.56px 357.28px,615.03px 359.14px,617.33px 360.88px,619.45px 362.49px,621.45px 364.01px,623.35px 365.45px,625.14px 366.81px,626.81px 368.08px,628.38px 369.28px,629.84px 370.39px,631.2px 371.42px,632.47px 372.36px,633.64px 373.22px,634.72px 374.02px,635.69px 374.75px,636.56px 375.41px,637.36px 376.02px,638.1px 376.58px,638.77px 377.09px,639.38px 377.56px,639.93px 377.98px,640.43px 378.36px,640.87px 378.69px,641.24px 378.97px,641.55px 379.21px,641.84px 379.43px,642.12px 379.64px,642.38px 379.84px,642.63px 380.03px,642.85px 380.19px,643.05px 380.34px,643.24px 380.49px,643.45px 380.65px,643.66px 380.81px,643.86px 380.96px,644.05px 381.1px,644.23px 381.24px,644.39px 381.36px,644.52px 381.46px,644.64px 381.55px,644.74px 381.63px,644.81px 381.68px,644.87px 381.73px,644.91px 381.76px,644.95px 381.79px,644.98px 381.81px,644.78px 383.22px)"></div>
<svg style="position:absolute;left:1161px;top:118px" width="737" height="559" viewBox="1161 118 737 559"><path d="M1313.16 674.92 1312.79 674.96 1312.87 674.96 1313.01 674.94 1313.06 674.92 1312.97 674.96 1312.78 675.02 1312.55 675.03 1312.5 675.03 1312.57 675.02 1312.58 675.02 1312.48 675.05 1312.3 675.09 1312.11 675.1 1312 675.1 1311.91 675.1 1311.82 675.1 1311.7 675.1 1311.6 675.1 1311.48 675.1 1311.28 675.11 1311 675.09 1310.74 675.03 1310.48 674.94 1310.21 674.83 1309.9 674.7 1309.55 674.53 1309.17 674.33 1308.78 674.11 1308.36 673.86 1307.9 673.57 1307.36 673.24 1306.76 672.85 1306.11 672.42 1305.43 671.95 1304.71 671.44 1303.91 670.89 1303.05 670.3 1302.09 669.67 1301.03 668.96 1299.82 668.17 1298.5 667.3 1297.07 666.36 1295.55 665.35 1293.91 664.25 1292.13 663 1290.21 661.62 1288.14 660.08 1285.93 658.3 1283.62 656.37 1281.15 654.18 1278.39 651.43 1275.32 648.08 1271.97 644.15 1268.31 639.41 1264.37 633.9 1260.13 627.57 1255.52 619.98 1250.54 611.13 1245.18 601.03 1239.41 589.3 1233.09 575.9 1226.34 560.86 1219.52 543.86 1212.69 524.73 1205.79 503.67 1199.03 480.86 1192.3 456.02 1185.71 429.44 1179.77 402.27 1174.49 374.45 1169.86 346.04 1166.31 318.31 1163.87 291.41 1162.5 265.2 1162.53 240.53 1164.04 217.38 1166.96 195.79 1171.35 176.67 1177.39 160.19 1184.92 146.21 1193.51 135.1 1203.2 127.21 1213.93 122.27 1225.1 119.64 1236.64 119.58 1248.56 121.83 1260.48 125.01 1272.43 128.91 1284.42 133.75 1296.17 138.86 1307.57 144.06 1318.75 149.54 1329.78 155.23 1340.66 161.11 1351.39 167.19 1362.07 173.47 1372.73 179.97 1383.34 186.66 1393.91 193.51 1404.43 200.5 1414.92 207.63 1425.39 214.87 1435.85 222.21 1446.31 229.65 1456.77 237.17 1467.26 244.76 1477.76 252.42 1488.24 260.13 1498.69 267.87 1509.12 275.64 1519.52 283.42 1529.93 291.19 1540.32 298.97 1550.63 306.71 1560.88 314.43 1571.05 322.11 1581.13 329.73 1591.11 337.29 1600.99 344.77 1610.74 352.15 1620.36 359.44 1629.83 366.61 1639.13 373.64 1648.24 380.52 1657.17 387.25 1665.84 393.79 1674.25 400.17 1682.39 406.36 1690.18 412.28 1697.57 417.87 1704.61 423.19 1711.36 428.29 1717.87 433.22 1724.11 437.93 1729.99 442.37 1735.48 446.5 1740.63 450.36 1745.45 453.98 1749.95 457.39 1754.13 460.57 1758.02 463.53 1761.62 466.27 1764.94 468.79 1768.04 471.13 1770.91 473.29 1773.56 475.28 1776.03 477.14 1778.33 478.88 1780.45 480.49 1782.45 482.01 1784.35 483.45 1786.14 484.81 1787.81 486.08 1789.38 487.28 1790.84 488.39 1792.2 489.42 1793.47 490.36 1794.64 491.22 1795.72 492.02 1796.69 492.75 1797.56 493.41 1798.36 494.02 1799.1 494.58 1799.77 495.09 1800.38 495.56 1800.93 495.98 1801.43 496.36 1801.87 496.69 1802.24 496.97 1802.55 497.21 1802.84 497.43 1803.12 497.64 1803.38 497.84 1803.63 498.03 1803.85 498.19 1804.05 498.34 1804.24 498.49 1804.45 498.65 1804.66 498.81 1804.86 498.96 1805.05 499.1 1805.23 499.24 1805.39 499.36 1805.52 499.46 1805.64 499.55 1805.74 499.63 1805.81 499.68 1805.87 499.73 1805.91 499.76 1805.95 499.79 1805.98 499.81 1805.78 501.22Z M1722.3 457.29 L1423.53 277.12 L1291.71 637.46Z" fill="#000" fill-opacity=".4" fill-rule="evenodd"/><rect x="1427.2" y="450.1" width="15.6" height="15.6" fill="none" stroke="#000" stroke-width="2"/><rect x="1503.26" y="425.37" width="15.6" height="15.6" fill="none" stroke="#fff" stroke-width="1.6"/><rect x="1484.99" y="430.71" width="15.6" height="15.6" fill="none" stroke="#fff" stroke-width="1.6"/><rect x="1370.84" y="491.17" width="15.6" height="15.6" fill="none" stroke="#fff" stroke-width="1.6"/><rect x="1449.84" y="383.4" width="15.6" height="15.6" fill="none" stroke="#fff" stroke-width="1.6"/><rect x="1387.09" y="499.91" width="15.6" height="15.6" fill="none" stroke="#fff" stroke-width="1.6"/><rect x="1382.26" y="427.1" width="15.6" height="15.6" fill="none" stroke="#fff" stroke-width="1.6"/><rect x="1601.6" y="397.28" width="15.6" height="15.6" fill="none" stroke="#fff" stroke-width="1.6"/><rect x="1341.95" y="541.6" width="15.6" height="15.6" fill="none" stroke="#fff" stroke-width="1.6"/><rect x="1557.6" y="460.7" width="15.6" height="15.6" fill="none" stroke="#fff" stroke-width="1.6"/><rect x="1407.2" y="521.3" width="15.6" height="15.6" fill="none" stroke="#fff" stroke-width="1.6"/><rect x="1481.6" y="339.7" width="15.6" height="15.6" fill="none" stroke="#fff" stroke-width="1.6"/><rect x="1568.45" y="375.3" width="15.6" height="15.6" fill="none" stroke="#fff" stroke-width="1.6"/><rect x="1320.3" y="575.5" width="15.6" height="15.6" fill="none" stroke="#fff" stroke-width="1.6"/><rect x="1419.7" y="340.95" width="15.6" height="15.6" fill="none" stroke="#fff" stroke-width="1.6"/><rect x="1624.3" y="457.8" width="15.6" height="15.6" fill="none" stroke="#fff" stroke-width="1.6"/><rect x="1545.3" y="352.2" width="15.6" height="15.6" fill="none" stroke="#fff" stroke-width="1.6"/><rect x="1480.3" y="504.3" width="15.6" height="15.6" fill="none" stroke="#fff" stroke-width="1.6"/><rect x="1334.1" y="488.45" width="15.6" height="15.6" fill="none" stroke="#fff" stroke-width="1.6"/><rect x="1713.9" y="448.19" width="15.6" height="15.6" fill="none" stroke="#fff" stroke-width="1.6"/><rect x="1415.12" y="268.02" width="15.6" height="15.6" fill="none" stroke="#fff" stroke-width="1.6"/><rect x="1283.31" y="628.36" width="15.6" height="15.6" fill="none" stroke="#fff" stroke-width="1.6"/><rect x="1348.87" y="449.06" width="15.6" height="15.6" fill="none" stroke="#fff" stroke-width="1.6"/><rect x="1433.49" y="565.5" width="15.6" height="15.6" fill="none" stroke="#fff" stroke-width="1.6"/><rect x="1520.3" y="332.1" width="15.6" height="15.6" fill="none" stroke="#fff" stroke-width="1.6"/><circle cx="1440.91" cy="450.15" r="4.9" fill="#f3f3f2" stroke="#000" stroke-width="1.3"/><circle cx="1442.85" cy="448.95" r="4.9" fill="#c8c8c8" stroke="#000" stroke-width="1.3"/><circle cx="1443.28" cy="449.15" r="4.9" fill="#a0a0a0" stroke="#000" stroke-width="1.3"/><circle cx="1443.64" cy="449.55" r="4.9" fill="#7a7a79" stroke="#000" stroke-width="1.3"/><circle cx="1443.9" cy="450.22" r="4.9" fill="#9a9a9a" stroke="#000" stroke-width="1.3"/><circle cx="1397.5" cy="493.06" r="4.9" fill="#000000" stroke="#000" stroke-width="1.3"/><circle cx="1529.58" cy="428.53" r="4.9" fill="#735244" stroke="#000" stroke-width="1.3"/><circle cx="1505.5" cy="434.8" r="4.9" fill="#c29682" stroke="#000" stroke-width="1.3"/><circle cx="1384.06" cy="491.32" r="4.9" fill="#627a9d" stroke="#000" stroke-width="1.3"/><circle cx="1468.68" cy="384.89" r="4.9" fill="#576c43" stroke="#000" stroke-width="1.3"/><circle cx="1403.57" cy="499.8" r="4.9" fill="#8580b1" stroke="#000" stroke-width="1.3"/><circle cx="1393.55" cy="426.33" r="4.9" fill="#67bdaa" stroke="#000" stroke-width="1.3"/><circle cx="1622.73" cy="404.58" r="4.9" fill="#d67e2c" stroke="#000" stroke-width="1.3"/><circle cx="1351.25" cy="543.1" r="4.9" fill="#505ba6" stroke="#000" stroke-width="1.3"/><circle cx="1581" cy="464" r="4.9" fill="#c15a63" stroke="#000" stroke-width="1.3"/><circle cx="1424.4" cy="525.9" r="4.9" fill="#5e3c6c" stroke="#000" stroke-width="1.3"/><circle cx="1498.5" cy="344.4" r="4.9" fill="#9dbc40" stroke="#000" stroke-width="1.3"/><circle cx="1588.5" cy="383.1" r="4.9" fill="#e0a32e" stroke="#000" stroke-width="1.3"/><circle cx="1325" cy="583.5" r="4.9" fill="#383d96" stroke="#000" stroke-width="1.3"/><circle cx="1430.4" cy="344.4" r="4.9" fill="#469449" stroke="#000" stroke-width="1.3"/><circle cx="1650.9" cy="462.5" r="4.9" fill="#af363c" stroke="#000" stroke-width="1.3"/><circle cx="1562.25" cy="360" r="4.9" fill="#e7c71f" stroke="#000" stroke-width="1.3"/><circle cx="1505" cy="504.1" r="4.9" fill="#bb5695" stroke="#000" stroke-width="1.3"/><circle cx="1339" cy="488.5" r="4.9" fill="#0885a1" stroke="#000" stroke-width="1.3"/><circle cx="1726.6" cy="454.6" r="4.9" fill="#ff0000" stroke="#000" stroke-width="1.3"/><circle cx="1421" cy="271.5" r="4.9" fill="#00ff00" stroke="#000" stroke-width="1.3"/><circle cx="1284.6" cy="637.75" r="4.9" fill="#0000ff" stroke="#000" stroke-width="1.3"/><circle cx="1354.5" cy="450" r="4.9" fill="#00ffff" stroke="#000" stroke-width="1.3"/><circle cx="1453.5" cy="568" r="4.9" fill="#ff00ff" stroke="#000" stroke-width="1.3"/><circle cx="1534.5" cy="340" r="4.9" fill="#ffff00" stroke="#000" stroke-width="1.3"/></svg>
<span class="t" style="left:1143.82px;top:671.55px;font-size:16.5px;color:#e4e4e4;">0</span>
<span class="t" style="left:1155.61px;top:688.85px;font-size:16.5px;color:#e4e4e4;">0</span>
<span class="t" style="left:1130.06px;top:604.67px;font-size:16.5px;color:#e4e4e4;">0,1</span>
<span class="t" style="left:1236.59px;top:688.85px;font-size:16.5px;color:#e4e4e4;">0,1</span>
<span class="t" style="left:1130.06px;top:537.8px;font-size:16.5px;color:#e4e4e4;">0,2</span>
<span class="t" style="left:1324.45px;top:688.85px;font-size:16.5px;color:#e4e4e4;">0,2</span>
<span class="t" style="left:1130.06px;top:470.92px;font-size:16.5px;color:#e4e4e4;">0,3</span>
<span class="t" style="left:1412.31px;top:688.85px;font-size:16.5px;color:#e4e4e4;">0,3</span>
<span class="t" style="left:1130.06px;top:404.05px;font-size:16.5px;color:#e4e4e4;">0,4</span>
<span class="t" style="left:1500.17px;top:688.85px;font-size:16.5px;color:#e4e4e4;">0,4</span>
<span class="t" style="left:1130.06px;top:337.17px;font-size:16.5px;color:#e4e4e4;">0,5</span>
<span class="t" style="left:1588.03px;top:688.85px;font-size:16.5px;color:#e4e4e4;">0,5</span>
<span class="t" style="left:1130.06px;top:270.3px;font-size:16.5px;color:#e4e4e4;">0,6</span>
<span class="t" style="left:1675.89px;top:688.85px;font-size:16.5px;color:#e4e4e4;">0,6</span>
<span class="t" style="left:1130.06px;top:203.43px;font-size:16.5px;color:#e4e4e4;">0,7</span>
<span class="t" style="left:1763.75px;top:688.85px;font-size:16.5px;color:#e4e4e4;">0,7</span>
<span class="t" style="left:1130.06px;top:136.55px;font-size:16.5px;color:#e4e4e4;">0,8</span>
<span class="t" style="left:1851.61px;top:688.85px;font-size:16.5px;color:#e4e4e4;">0,8</span>
<div style="position:absolute;left:1607px;top:641px;width:290px;height:32px;background:#323232"></div>
<span class="t" style="left:1609px;top:646.25px;font-size:22.5px;color:#f4f4f4;transform:scaleX(0.994);">RGB Triplet: 255, 255, 0</span>
<div style="position:absolute;left:1639px;top:122px;width:255px;height:216px;background:#333"></div>
<div style="position:absolute;left:1643px;top:125px;width:248px;height:208px;box-shadow:0 0 0 1px #9a9a9a;background:conic-gradient(from 31.31deg at -1213.23px 1955.95px,rgb(168,255,255) 0deg,rgb(204,255,255) 2.021deg,rgb(241,255,255) 3.862deg,rgb(255,254,255) 4.512deg,rgb(255,227,255) 5.863deg,rgb(255,200,255) 7.373deg,rgb(255,174,255) 9.074deg,rgb(255,174,255) 9.084deg),conic-gradient(from 111.55deg at -469.23px -290.45px,rgb(255,255,0) 0deg,rgb(255,255,0) 12.352deg,rgb(255,255,26) 23.683deg,rgb(255,255,31) 25.684deg),conic-gradient(from 296.67deg at 1217.17px 832.75px,rgb(255,255,30) 0deg,rgb(255,255,3) 6.11deg,rgb(255,255,0) 7.14deg,rgb(255,255,0) 14.5deg);background-blend-mode:darken,darken,normal"></div>
<svg style="position:absolute;left:1643px;top:125px" width="248" height="208"><path d="M0 0H248 V187.25 L0 22.07Z" fill="#000" fill-opacity=".4"/><rect x="115" y="96" width="15" height="15" fill="none" stroke="#fff" stroke-width="1.6"/><circle cx="156.23" cy="101.75" r="4.6" fill="#ff0" stroke="#000" stroke-width="1.3"/></svg>
<div style="position:absolute;left:376px;top:735px;width:1532px;height:258px;overflow:hidden">
<div style="position:absolute;left:0;top:0;width:100%;height:32px;background:linear-gradient(#2f2f2f 50%,#151515 50%)"></div>
<div style="position:absolute;left:0;top:0;width:19px;height:32px;background:#000"></div>
<div style="position:absolute;left:19px;top:32px;width:100%;height:30px;background:linear-gradient(#474747,#3d3d3d)"></div>
<div style="position:absolute;left:0;top:32px;width:19px;height:30px;background:linear-gradient(#2a2a2a,#222)"></div>
<div style="position:absolute;left:19px;top:62px;width:100%;height:29px;background:linear-gradient(90deg,#7c7c7c,#8a8a8a 30%,#858585 70%,#7e7e7e)"></div>
<div style="position:absolute;left:0;top:62px;width:19px;height:29px;background:linear-gradient(#2a2a2a,#222)"></div>
<div style="position:absolute;left:19px;top:91px;width:100%;height:29px;background:linear-gradient(#474747,#3d3d3d)"></div>
<div style="position:absolute;left:0;top:91px;width:19px;height:29px;background:linear-gradient(#2a2a2a,#222)"></div>
<div style="position:absolute;left:19px;top:120px;width:100%;height:30px;background:linear-gradient(90deg,#7c7c7c,#8a8a8a 30%,#858585 70%,#7e7e7e)"></div>
<div style="position:absolute;left:0;top:120px;width:19px;height:30px;background:linear-gradient(#2a2a2a,#222)"></div>
<div style="position:absolute;left:19px;top:150px;width:100%;height:29px;background:linear-gradient(#474747,#3d3d3d)"></div>
<div style="position:absolute;left:0;top:150px;width:19px;height:29px;background:linear-gradient(#2a2a2a,#222)"></div>
<div style="position:absolute;left:19px;top:179px;width:100%;height:30px;background:linear-gradient(90deg,#7c7c7c,#8a8a8a 30%,#858585 70%,#7e7e7e)"></div>
<div style="position:absolute;left:0;top:179px;width:19px;height:30px;background:linear-gradient(#2a2a2a,#222)"></div>
<div style="position:absolute;left:19px;top:209px;width:100%;height:29px;background:linear-gradient(#474747,#3d3d3d)"></div>
<div style="position:absolute;left:0;top:209px;width:19px;height:29px;background:linear-gradient(#2a2a2a,#222)"></div>
<span class="t" style="left:175.5px;top:7.8px;font-size:18px;color:#fff;transform:scaleX(1.178);">White</span>
<span class="t" style="left:277.6px;top:7.8px;font-size:18px;color:#fff;transform:scaleX(1.082);">Gray 80</span>
<span class="t" style="left:380px;top:7.8px;font-size:18px;color:#fff;transform:scaleX(1.082);">Gray 65</span>
<span class="t" style="left:482.4px;top:7.8px;font-size:18px;color:#fff;transform:scaleX(1.082);">Gray 50</span>
<span class="t" style="left:584.4px;top:7.8px;font-size:18px;color:#fff;transform:scaleX(1.082);">Gray 35</span>
<span class="t" style="left:686.8px;top:7.8px;font-size:18px;color:#fff;transform:scaleX(1.059);">Black</span>
<span class="t" style="left:764.8px;top:7.8px;font-size:18px;color:#fff;transform:scaleX(1.066);">Dark Skin</span>
<span class="t" style="left:861px;top:7.8px;font-size:18px;color:#fff;transform:scaleX(1.069);">Light Skin</span>
<span class="t" style="left:963.1px;top:7.8px;font-size:18px;color:#fff;transform:scaleX(1.084);">Blue Sky</span>
<span class="t" style="left:1053px;top:7.8px;font-size:18px;color:#fff;transform:scaleX(1.069);">Foliage</span>
<span class="t" style="left:1143.2px;top:7.8px;font-size:18px;color:#fff;transform:scaleX(1.111);">Blue Flower</span>
<span class="t" style="left:1261.5px;top:7.8px;font-size:18px;color:#fff;transform:scaleX(1.094);">Bluish Green</span>
<span class="t" style="left:1387.8px;top:7.8px;font-size:18px;color:#fff;transform:scaleX(1.083);">Orange</span>
<span class="t" style="left:1489.9px;top:7.8px;font-size:18px;color:#fff;transform:scaleX(1.1);">Purplish Blue</span>
<span class="t" style="left:24.7px;top:39px;font-size:18px;color:#fff;transform:scaleX(1.076);">x: CIE31</span>
<span class="t" style="left:175.5px;top:39px;font-size:18px;color:#fff;transform:scaleX(1.166);">0,3199</span>
<span class="t" style="left:277.6px;top:39px;font-size:18px;color:#fff;transform:scaleX(1.166);">0,3221</span>
<span class="t" style="left:380px;top:39px;font-size:18px;color:#fff;transform:scaleX(1.166);">0,3226</span>
<span class="t" style="left:482.4px;top:39px;font-size:18px;color:#fff;transform:scaleX(1.166);">0,3230</span>
<span class="t" style="left:584.4px;top:39px;font-size:18px;color:#fff;transform:scaleX(1.166);">0,3233</span>
<span class="t" style="left:686.8px;top:39px;font-size:18px;color:#fff;transform:scaleX(1.166);">0,2705</span>
<span class="t" style="left:764.8px;top:39px;font-size:18px;color:#fff;transform:scaleX(1.166);">0,4208</span>
<span class="t" style="left:861px;top:39px;font-size:18px;color:#fff;transform:scaleX(1.166);">0,3934</span>
<span class="t" style="left:963.1px;top:39px;font-size:18px;color:#fff;transform:scaleX(1.166);">0,2552</span>
<span class="t" style="left:1053px;top:39px;font-size:18px;color:#fff;transform:scaleX(1.166);">0,3515</span>
<span class="t" style="left:1143.2px;top:39px;font-size:18px;color:#fff;transform:scaleX(1.166);">0,2774</span>
<span class="t" style="left:1261.5px;top:39px;font-size:18px;color:#fff;transform:scaleX(1.166);">0,2660</span>
<span class="t" style="left:1387.8px;top:39px;font-size:18px;color:#fff;transform:scaleX(1.166);">0,5268</span>
<span class="t" style="left:1489.9px;top:39px;font-size:18px;color:#fff;transform:scaleX(1.166);">0,2176</span>
<span class="t" style="left:24.7px;top:68.43px;font-size:18px;color:#f0f0f0;transform:scaleX(1.082);">y: CIE31</span>
<span class="t" style="left:175.5px;top:68.43px;font-size:18px;color:#f0f0f0;transform:scaleX(1.166);">0,3389</span>
<span class="t" style="left:277.6px;top:68.43px;font-size:18px;color:#f0f0f0;transform:scaleX(1.166);">0,3407</span>
<span class="t" style="left:380px;top:68.43px;font-size:18px;color:#f0f0f0;transform:scaleX(1.166);">0,3404</span>
<span class="t" style="left:482.4px;top:68.43px;font-size:18px;color:#f0f0f0;transform:scaleX(1.166);">0,3398</span>
<span class="t" style="left:584.4px;top:68.43px;font-size:18px;color:#f0f0f0;transform:scaleX(1.166);">0,3388</span>
<span class="t" style="left:686.8px;top:68.43px;font-size:18px;color:#f0f0f0;transform:scaleX(1.166);">0,2746</span>
<span class="t" style="left:764.8px;top:68.43px;font-size:18px;color:#f0f0f0;transform:scaleX(1.166);">0,3713</span>
<span class="t" style="left:861px;top:68.43px;font-size:18px;color:#f0f0f0;transform:scaleX(1.166);">0,3619</span>
<span class="t" style="left:963.1px;top:68.43px;font-size:18px;color:#f0f0f0;transform:scaleX(1.166);">0,2772</span>
<span class="t" style="left:1053px;top:68.43px;font-size:18px;color:#f0f0f0;transform:scaleX(1.166);">0,4367</span>
<span class="t" style="left:1143.2px;top:68.43px;font-size:18px;color:#f0f0f0;transform:scaleX(1.166);">0,2645</span>
<span class="t" style="left:1261.5px;top:68.43px;font-size:18px;color:#f0f0f0;transform:scaleX(1.166);">0,3746</span>
<span class="t" style="left:1387.8px;top:68.43px;font-size:18px;color:#f0f0f0;transform:scaleX(1.166);">0,4072</span>
<span class="t" style="left:1489.9px;top:68.43px;font-size:18px;color:#f0f0f0;transform:scaleX(1.166);">0,2004</span>
<span class="t" style="left:24.7px;top:97.86px;font-size:18px;color:#fff;transform:scaleX(0.974);">Y</span>
<span class="t" style="left:175.5px;top:97.86px;font-size:18px;color:#fff;transform:scaleX(1.166);">509,9983</span>
<span class="t" style="left:277.6px;top:97.86px;font-size:18px;color:#fff;transform:scaleX(1.166);">399,5272</span>
<span class="t" style="left:380px;top:97.86px;font-size:18px;color:#fff;transform:scaleX(1.166);">320,8722</span>
<span class="t" style="left:482.4px;top:97.86px;font-size:18px;color:#fff;transform:scaleX(1.166);">247,5048</span>
<span class="t" style="left:584.4px;top:97.86px;font-size:18px;color:#fff;transform:scaleX(1.166);">170,5326</span>
<span class="t" style="left:686.8px;top:97.86px;font-size:18px;color:#fff;transform:scaleX(1.166);">0,4131</span>
<span class="t" style="left:764.8px;top:97.86px;font-size:18px;color:#fff;transform:scaleX(1.166);">51,1757</span>
<span class="t" style="left:861px;top:97.86px;font-size:18px;color:#fff;transform:scaleX(1.166);">177,2778</span>
<span class="t" style="left:963.1px;top:97.86px;font-size:18px;color:#fff;transform:scaleX(1.166);">92,6385</span>
<span class="t" style="left:1053px;top:97.86px;font-size:18px;color:#fff;transform:scaleX(1.166);">65,1850</span>
<span class="t" style="left:1143.2px;top:97.86px;font-size:18px;color:#fff;transform:scaleX(1.166);">116,8065</span>
<span class="t" style="left:1261.5px;top:97.86px;font-size:18px;color:#fff;transform:scaleX(1.166);">207,7724</span>
<span class="t" style="left:1387.8px;top:97.86px;font-size:18px;color:#fff;transform:scaleX(1.166);">147,5882</span>
<span class="t" style="left:1489.9px;top:97.86px;font-size:18px;color:#fff;transform:scaleX(1.166);">57,1813</span>
<span class="t" style="left:24.7px;top:127.29px;font-size:18px;color:#f0f0f0;transform:scaleX(1.131);">Target x:CIE31</span>
<span class="t" style="left:175.5px;top:127.29px;font-size:18px;color:#f0f0f0;transform:scaleX(1.166);">0,3127</span>
<span class="t" style="left:277.6px;top:127.29px;font-size:18px;color:#f0f0f0;transform:scaleX(1.166);">0,3127</span>
<span class="t" style="left:380px;top:127.29px;font-size:18px;color:#f0f0f0;transform:scaleX(1.166);">0,3127</span>
<span class="t" style="left:482.4px;top:127.29px;font-size:18px;color:#f0f0f0;transform:scaleX(1.166);">0,3127</span>
<span class="t" style="left:584.4px;top:127.29px;font-size:18px;color:#f0f0f0;transform:scaleX(1.166);">0,3127</span>
<span class="t" style="left:686.8px;top:127.29px;font-size:18px;color:#f0f0f0;transform:scaleX(1.166);">0,3127</span>
<span class="t" style="left:764.8px;top:127.29px;font-size:18px;color:#f0f0f0;transform:scaleX(1.166);">0,4003</span>
<span class="t" style="left:861px;top:127.29px;font-size:18px;color:#f0f0f0;transform:scaleX(1.166);">0,3795</span>
<span class="t" style="left:963.1px;top:127.29px;font-size:18px;color:#f0f0f0;transform:scaleX(1.166);">0,2496</span>
<span class="t" style="left:1053px;top:127.29px;font-size:18px;color:#f0f0f0;transform:scaleX(1.166);">0,3395</span>
<span class="t" style="left:1143.2px;top:127.29px;font-size:18px;color:#f0f0f0;transform:scaleX(1.166);">0,2681</span>
<span class="t" style="left:1261.5px;top:127.29px;font-size:18px;color:#f0f0f0;transform:scaleX(1.166);">0,2626</span>
<span class="t" style="left:1387.8px;top:127.29px;font-size:18px;color:#f0f0f0;transform:scaleX(1.166);">0,5122</span>
<span class="t" style="left:1489.9px;top:127.29px;font-size:18px;color:#f0f0f0;transform:scaleX(1.166);">0,2161</span>
<span class="t" style="left:24.7px;top:156.72px;font-size:18px;color:#fff;transform:scaleX(1.14);">Target y:CIE31</span>
<span class="t" style="left:175.5px;top:156.72px;font-size:18px;color:#fff;transform:scaleX(1.166);">0,3290</span>
<span class="t" style="left:277.6px;top:156.72px;font-size:18px;color:#fff;transform:scaleX(1.166);">0,3290</span>
<span class="t" style="left:380px;top:156.72px;font-size:18px;color:#fff;transform:scaleX(1.166);">0,3290</span>
<span class="t" style="left:482.4px;top:156.72px;font-size:18px;color:#fff;transform:scaleX(1.166);">0,3290</span>
<span class="t" style="left:584.4px;top:156.72px;font-size:18px;color:#fff;transform:scaleX(1.166);">0,3290</span>
<span class="t" style="left:686.8px;top:156.72px;font-size:18px;color:#fff;transform:scaleX(1.166);">0,3290</span>
<span class="t" style="left:764.8px;top:156.72px;font-size:18px;color:#fff;transform:scaleX(1.166);">0,3642</span>
<span class="t" style="left:861px;top:156.72px;font-size:18px;color:#fff;transform:scaleX(1.166);">0,3562</span>
<span class="t" style="left:963.1px;top:156.72px;font-size:18px;color:#fff;transform:scaleX(1.166);">0,2656</span>
<span class="t" style="left:1053px;top:156.72px;font-size:18px;color:#fff;transform:scaleX(1.166);">0,4271</span>
<span class="t" style="left:1143.2px;top:156.72px;font-size:18px;color:#fff;transform:scaleX(1.166);">0,2525</span>
<span class="t" style="left:1261.5px;top:156.72px;font-size:18px;color:#fff;transform:scaleX(1.166);">0,3616</span>
<span class="t" style="left:1387.8px;top:156.72px;font-size:18px;color:#fff;transform:scaleX(1.166);">0,4063</span>
<span class="t" style="left:1489.9px;top:156.72px;font-size:18px;color:#fff;transform:scaleX(1.166);">0,1925</span>
<span class="t" style="left:24.7px;top:186.15px;font-size:18px;color:#f0f0f0;transform:scaleX(1.174);">Target Y</span>
<span class="t" style="left:175.5px;top:186.15px;font-size:18px;color:#f0f0f0;transform:scaleX(1.166);">509,9983</span>
<span class="t" style="left:277.6px;top:186.15px;font-size:18px;color:#f0f0f0;transform:scaleX(1.166);">403,5606</span>
<span class="t" style="left:380px;top:186.15px;font-size:18px;color:#f0f0f0;transform:scaleX(1.166);">325,1733</span>
<span class="t" style="left:482.4px;top:186.15px;font-size:18px;color:#f0f0f0;transform:scaleX(1.166);">250,4198</span>
<span class="t" style="left:584.4px;top:186.15px;font-size:18px;color:#f0f0f0;transform:scaleX(1.166);">174,3758</span>
<span class="t" style="left:686.8px;top:186.15px;font-size:18px;color:#f0f0f0;transform:scaleX(1.166);">0,0000</span>
<span class="t" style="left:764.8px;top:186.15px;font-size:18px;color:#f0f0f0;transform:scaleX(1.166);">51,3737</span>
<span class="t" style="left:861px;top:186.15px;font-size:18px;color:#f0f0f0;transform:scaleX(1.166);">177,9647</span>
<span class="t" style="left:963.1px;top:186.15px;font-size:18px;color:#f0f0f0;transform:scaleX(1.166);">95,3615</span>
<span class="t" style="left:1053px;top:186.15px;font-size:18px;color:#f0f0f0;transform:scaleX(1.166);">66,4653</span>
<span class="t" style="left:1143.2px;top:186.15px;font-size:18px;color:#f0f0f0;transform:scaleX(1.166);">118,9239</span>
<span class="t" style="left:1261.5px;top:186.15px;font-size:18px;color:#f0f0f0;transform:scaleX(1.166);">213,5516</span>
<span class="t" style="left:1387.8px;top:186.15px;font-size:18px;color:#f0f0f0;transform:scaleX(1.166);">144,5734</span>
<span class="t" style="left:1489.9px;top:186.15px;font-size:18px;color:#f0f0f0;transform:scaleX(1.166);">59,9410</span>
<span class="t" style="left:24.7px;top:215.58px;font-size:18px;color:#fff;transform:scaleX(1.144);">ΔE 2000</span>
<span class="t" style="left:175.5px;top:215.58px;font-size:18px;color:#fff;transform:scaleX(1.166);">4,8529</span>
<span class="t" style="left:277.6px;top:215.58px;font-size:18px;color:#fff;transform:scaleX(1.166);">5,2015</span>
<span class="t" style="left:380px;top:215.58px;font-size:18px;color:#fff;transform:scaleX(1.166);">4,8346</span>
<span class="t" style="left:482.4px;top:215.58px;font-size:18px;color:#fff;transform:scaleX(1.166);">4,3436</span>
<span class="t" style="left:584.4px;top:215.58px;font-size:18px;color:#fff;transform:scaleX(1.166);">3,7536</span>
<span class="t" style="left:686.8px;top:215.58px;font-size:18px;color:#fff;transform:scaleX(1.166);">0,7907</span>
<span class="t" style="left:764.8px;top:215.58px;font-size:18px;color:#fff;transform:scaleX(1.166);">2,3629</span>
<span class="t" style="left:861px;top:215.58px;font-size:18px;color:#fff;transform:scaleX(1.166);">2,2168</span>
<span class="t" style="left:963.1px;top:215.58px;font-size:18px;color:#fff;transform:scaleX(1.166);">2,5525</span>
<span class="t" style="left:1053px;top:215.58px;font-size:18px;color:#fff;transform:scaleX(1.166);">2,0064</span>
<span class="t" style="left:1143.2px;top:215.58px;font-size:18px;color:#fff;transform:scaleX(1.166);">2,5443</span>
<span class="t" style="left:1261.5px;top:215.58px;font-size:18px;color:#fff;transform:scaleX(1.166);">2,5793</span>
<span class="t" style="left:1387.8px;top:215.58px;font-size:18px;color:#fff;transform:scaleX(1.166);">1,6603</span>
<span class="t" style="left:1489.9px;top:215.58px;font-size:18px;color:#fff;transform:scaleX(1.166);">1,6214</span>
<div style="position:absolute;left:19px;top:239px;width:1513px;height:18px;background:#5f5f5f;border-radius:3px"></div>
<div style="position:absolute;left:43px;top:240px;width:660px;height:15px;background:#434343;border-radius:8px"></div>
<div style="position:absolute;left:20px;top:240px;width:18px;height:15px;background:#808080;border-radius:3px"></div>
<div style="position:absolute;left:1513px;top:240px;width:17px;height:15px;background:#808080;border-radius:3px"></div>
<svg style="position:absolute;left:0;top:239px" width="1532" height="18"><path d="M26 8.5l7-5.5v11z" fill="#444"/><path d="M1526 8.5l-7-5.5v11z" fill="#444"/></svg>
</div>
<div style="position:absolute;left:0;top:996px;width:1920px;height:48px;background:#262626"></div>
<div class="pb" style="left:1px"><i style="background:#ffffff"></i></div>
<span class="t" style="left:17.85px;top:1033.65px;font-size:8.1px;color:#262626;transform:scaleX(0.98);text-shadow:0 0 .7px #262626;">White</span>
<div class="pb" style="left:57px"><i style="background:#e6e6e6"></i></div>
<span class="t" style="left:69.75px;top:1033.65px;font-size:8.1px;color:#262626;transform:scaleX(0.98);text-shadow:0 0 .7px #262626;">Gray 80</span>
<div class="pb" style="left:112.5px"><i style="background:#d1d1d1"></i></div>
<span class="t" style="left:125.62px;top:1033.65px;font-size:8.1px;color:#262626;transform:scaleX(0.98);text-shadow:0 0 .7px #262626;">Gray 65</span>
<div class="pb" style="left:168.5px"><i style="background:#b9b9b9"></i></div>
<span class="t" style="left:181.49px;top:1033.65px;font-size:8.1px;color:#262626;transform:scaleX(0.98);text-shadow:0 0 .7px #262626;">Gray 50</span>
<div class="pb" style="left:224.5px"><i style="background:#9e9e9e"></i></div>
<span class="t" style="left:237.36px;top:1033.65px;font-size:8.1px;color:#262626;transform:scaleX(0.98);text-shadow:0 0 .7px #262626;">Gray 35</span>
<div class="pb" style="left:280.5px"><i style="background:#000000"></i></div>
<span class="t" style="left:297.64px;top:1033.65px;font-size:8.1px;color:#262626;transform:scaleX(0.98);text-shadow:0 0 .7px #262626;">Black</span>
<div class="pb" style="left:336px"><i style="background:#735244"></i></div>
<span class="t" style="left:346.02px;top:1033.65px;font-size:8.1px;color:#262626;transform:scaleX(0.98);text-shadow:0 0 .7px #262626;">Dark Skin</span>
<div class="pb" style="left:392px"><i style="background:#c29682"></i></div>
<span class="t" style="left:401.66px;top:1033.65px;font-size:8.1px;color:#262626;transform:scaleX(0.98);text-shadow:0 0 .7px #262626;">Light Skin</span>
<div class="pb" style="left:448px"><i style="background:#5e7a9d"></i></div>
<span class="t" style="left:459.3px;top:1033.65px;font-size:8.1px;color:#262626;transform:scaleX(0.98);text-shadow:0 0 .7px #262626;">Blue Sky</span>
<div class="pb" style="left:504px"><i style="background:#576c43"></i></div>
<span class="t" style="left:517.81px;top:1033.65px;font-size:8.1px;color:#262626;transform:scaleX(0.98);text-shadow:0 0 .7px #262626;">Foliage</span>
<div class="pb" style="left:559.5px"><i style="background:#8580b1"></i></div>
<span class="t" style="left:565.74px;top:1033.65px;font-size:8.1px;color:#262626;transform:scaleX(0.98);text-shadow:0 0 .7px #262626;">Blue Flower</span>
<div class="pb" style="left:615.5px"><i style="background:#67bdaa"></i></div>
<span class="t" style="left:619.63px;top:1033.65px;font-size:8.1px;color:#262626;transform:scaleX(0.98);text-shadow:0 0 .7px #262626;">Bluish Green</span>
<div class="pb" style="left:671.5px"><i style="background:#d67e2c"></i></div>
<span class="t" style="left:685.2px;top:1033.65px;font-size:8.1px;color:#262626;transform:scaleX(0.98);text-shadow:0 0 .7px #262626;">Orange</span>
<div class="pb" style="left:727.5px"><i style="background:#505ba6"></i></div>
<span class="t" style="left:730.92px;top:1033.65px;font-size:8.1px;color:#262626;transform:scaleX(0.98);text-shadow:0 0 .7px #262626;">Purplish Blue</span>
<div class="pb" style="left:783px"><i style="background:#c15a63"></i></div>
<span class="t" style="left:785.03px;top:1033.65px;font-size:8.1px;color:#262626;transform:scaleX(0.98);text-shadow:0 0 .7px #262626;">Moderate Red</span>
<div class="pb" style="left:839px"><i style="background:#5e3c6c"></i></div>
<span class="t" style="left:854.58px;top:1033.65px;font-size:8.1px;color:#262626;transform:scaleX(0.98);text-shadow:0 0 .7px #262626;">Purple</span>
<div class="pb" style="left:895px"><i style="background:#9dbc40"></i></div>
<span class="t" style="left:898.46px;top:1033.65px;font-size:8.1px;color:#262626;transform:scaleX(0.98);text-shadow:0 0 .7px #262626;">Yellow Green</span>
<div class="pb" style="left:951px"><i style="background:#e0a32e"></i></div>
<span class="t" style="left:952.19px;top:1033.65px;font-size:8.1px;color:#262626;transform:scaleX(0.98);text-shadow:0 0 .7px #262626;">Orange Yellow</span>
<div class="pb" style="left:1006.5px"><i style="background:#383d96"></i></div>
<span class="t" style="left:1025.72px;top:1033.65px;font-size:8.1px;color:#262626;transform:scaleX(0.98);text-shadow:0 0 .7px #262626;">Blue</span>
<div class="pb" style="left:1062.5px"><i style="background:#469449"></i></div>
<span class="t" style="left:1078.5px;top:1033.65px;font-size:8.1px;color:#262626;transform:scaleX(0.98);text-shadow:0 0 .7px #262626;">Green</span>
<div class="pb" style="left:1118.5px"><i style="background:#af363c"></i></div>
<span class="t" style="left:1138.12px;top:1033.65px;font-size:8.1px;color:#262626;transform:scaleX(0.98);text-shadow:0 0 .7px #262626;">Red</span>
<div class="pb" style="left:1174.5px"><i style="background:#e7c71f"></i></div>
<span class="t" style="left:1189.94px;top:1033.65px;font-size:8.1px;color:#262626;transform:scaleX(0.98);text-shadow:0 0 .7px #262626;">Yellow</span>
<div class="pb" style="left:1230px"><i style="background:#bb5695"></i></div>
<span class="t" style="left:1241.69px;top:1033.65px;font-size:8.1px;color:#262626;transform:scaleX(0.98);text-shadow:0 0 .7px #262626;">Magenta</span>
<div class="pb" style="left:1286px"><i style="background:#0885a1"></i></div>
<span class="t" style="left:1303.74px;top:1033.65px;font-size:8.1px;color:#262626;transform:scaleX(0.98);text-shadow:0 0 .7px #262626;">Cyan</span>
<div class="pb" style="left:1342px"><i style="background:#ff0000"></i></div>
<span class="t" style="left:1350.34px;top:1033.65px;font-size:8.1px;color:#262626;transform:scaleX(0.98);text-shadow:0 0 .7px #262626;">100% Red</span>
<div class="pb" style="left:1398px"><i style="background:#00ff00"></i></div>
<span class="t" style="left:1402.46px;top:1033.65px;font-size:8.1px;color:#262626;transform:scaleX(0.98);text-shadow:0 0 .7px #262626;">100% Green</span>
<div class="pb" style="left:1453.5px"><i style="background:#0000ff"></i></div>
<span class="t" style="left:1461.42px;top:1033.65px;font-size:8.1px;color:#262626;transform:scaleX(0.98);text-shadow:0 0 .7px #262626;">100% Blue</span>
<div class="pb" style="left:1509.5px"><i style="background:#00ffff"></i></div>
<span class="t" style="left:1515.97px;top:1033.65px;font-size:8.1px;color:#262626;transform:scaleX(0.98);text-shadow:0 0 .7px #262626;">100% Cyan</span>
<div class="pb" style="left:1565.5px"><i style="background:#ff00ff;height:18px"></i></div>
<span class="t" style="left:1576.16px;top:1024.4px;font-size:8.2px;color:#262626;text-shadow:0 0 .7px #262626;">100%</span>
<span class="t" style="left:1576.16px;top:1033.6px;font-size:8.2px;color:#262626;text-shadow:0 0 .7px #262626;">Magenta</span>
<div class="pb sel" style="left:1621px"><i style="background:#ffff00"></i></div>
<span class="t" style="left:1625.72px;top:1033.65px;font-size:8.1px;color:#fff;transform:scaleX(0.98);text-shadow:0 0 .7px #fff;">100% Yellow</span>
<div class="cb" style="left:1678px;top:997.5px;width:35px;height:13.5px"></div>
<div class="cb" style="left:1678px;top:1012px;width:35px;height:31px"></div>
<div style="position:absolute;left:1689px;top:999px;width:13px;height:11px;border-radius:50%;background:linear-gradient(#6a6a6a,#909090)"></div>
<svg style="position:absolute;left:1678px;top:997px" width="36" height="47"><path d="M14 8h7l-3.5-3.6z" fill="#333"/><rect x="7" y="19.5" width="21" height="21" rx="2.5" fill="#9a9a9a" stroke="#222" stroke-width="1.5"/><rect x="12.5" y="25" width="10" height="10" fill="#000"/></svg>
<div class="cb" style="left:1715px;top:997.5px;width:34px;height:22px"></div>
<div style="position:absolute;left:1724.5px;top:1001px;width:15px;height:15px;border-radius:50%;background:linear-gradient(#6a6a6a,#929292)"></div>
<div class="cb" style="left:1750px;top:997.5px;width:32px;height:22px"></div>
<div style="position:absolute;left:1758.5px;top:1001px;width:15px;height:15px;border-radius:50%;background:linear-gradient(#6a6a6a,#929292)"></div>
<div class="cb" style="left:1783px;top:997.5px;width:33px;height:22px"></div>
<div style="position:absolute;left:1792px;top:1001px;width:15px;height:15px;border-radius:50%;background:linear-gradient(#6a6a6a,#929292)"></div>
<div class="cb" style="left:1817px;top:997.5px;width:32px;height:22px"></div>
<div style="position:absolute;left:1825.5px;top:1001px;width:15px;height:15px;border-radius:50%;background:linear-gradient(#6a6a6a,#929292)"></div>
<div class="cb dk" style="left:1850px;top:997.5px;width:33px;height:22px"></div>
<div style="position:absolute;left:1859px;top:1001px;width:15px;height:15px;border-radius:50%;background:linear-gradient(#2c2c2c,#3a3a3a)"></div>
<div class="cb dk" style="left:1884px;top:997.5px;width:34px;height:22px"></div>
<div style="position:absolute;left:1893.5px;top:1001px;width:15px;height:15px;border-radius:50%;background:linear-gradient(#2c2c2c,#3a3a3a)"></div>
<svg style="position:absolute;left:1715px;top:997px" width="205" height="23"><rect x="14" y="9" width="6" height="6" fill="#333"/><path d="M48.5 8l6.5 4-6.5 4z" fill="#2c2c2c"/><g fill="none" stroke="#333" stroke-width="1.2"><path d="M83 8.2h-2v7.6h2M86.5 8.2h2v7.6h-2"/><path d="M83.5 12h2.5" stroke-dasharray=".8 .6"/><path d="M118 12c-1.2-2.2-4.2-2.2-4.2 0s3 2.2 4.2 0c1.200-2.200 4.200-2.200 4.200 0s-3 2.200-4.200 0z"/></g><g fill="none" stroke="#1a1a1a" stroke-width="1.900"><path d="M147.800 10.800a4.200 4.200 0 0 1 7.400-1.600M155.700 13.200a4.200 4.200 0 0 1-7.400 1.600"/></g><path d="M156.500 7v3.600h-3.600zM147 17v-3.600h3.600z" fill="#1a1a1a"/></svg>
<div class="cb" style="left:1715px;top:1021px;width:101px;height:22.5px"></div><div class="cb" style="left:1816.5px;top:1021px;width:101.5px;height:22.5px"></div>
<div style="position:absolute;left:1730px;top:1024.5px;width:15px;height:15px;border-radius:50%;background:linear-gradient(#6a6a6a,#929292)"></div><div style="position:absolute;left:1890px;top:1024.5px;width:15px;height:15px;border-radius:50%;background:linear-gradient(#6a6a6a,#929292)"></div>
<svg style="position:absolute;left:1730px;top:1024px" width="180" height="16"><g fill="none" stroke="#303030" stroke-width="1.300"><path d="M7.600 4.200l-3.600 3.800 3.600 3.800M11.400 4.200l-3.600 3.800 3.600 3.800M163.600 4.200l3.600 3.800-3.600 3.800M167.400 4.200l3.600 3.800-3.600 3.800"/></g></svg>
<span class="t" style="left:1758px;top:1024.7px;font-size:17.8px;color:#2e2e2e;transform:scaleX(0.935);text-shadow:0 0 .6px #2e2e2e;">Back</span>
<span class="t" style="left:1838.5px;top:1024.7px;font-size:17.8px;color:#2e2e2e;transform:scaleX(1.052);text-shadow:0 0 .6px #2e2e2e;">Next</span>
</body></html>
